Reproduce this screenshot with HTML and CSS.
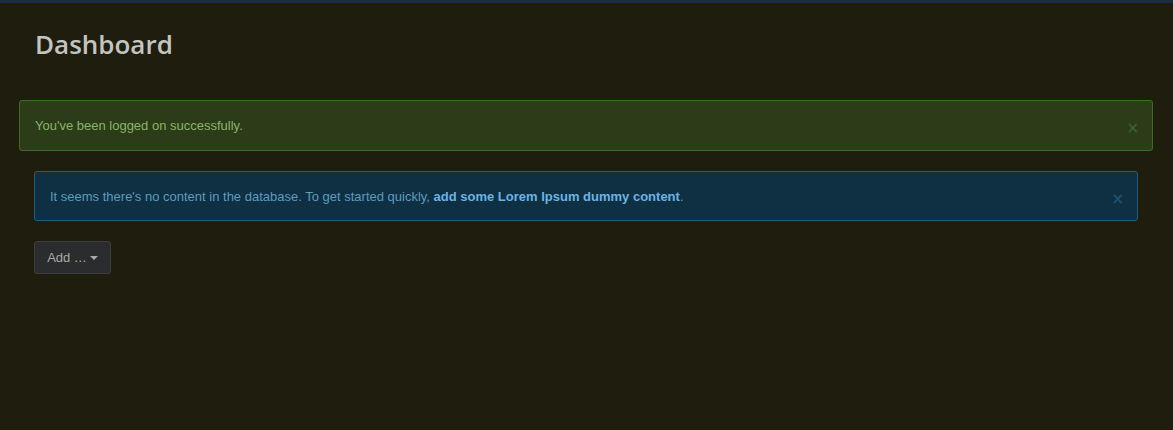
FILE: index.html
```html
<!DOCTYPE html>
<html>
<head>
<meta charset="utf-8">
<link rel="stylesheet" href="styles.css">
</head>
<body>
<div class="topbar"></div>
<main class="page">
  <h1 class="title">Dashboard</h1>
  <div class="alert alert-success">
    <span>You've been logged on successfully.</span>
    <span class="close">×</span>
  </div>
  <div class="inner">
    <div class="alert alert-info">
      <span>It seems there's no content in the database. To get started quickly, <a class="link" href="#">add some Lorem Ipsum dummy content</a>.</span>
      <span class="close">×</span>
    </div>
    <div class="actions">
      <button class="btn">Add … <span class="caret"></span></button>
    </div>
  </div>
</main>
</body>
</html>
```

FILE: styles.css
```css
html, body {
  margin: 0;
  padding: 0;
  background: #1f1e0e;
  height: 100%;
}
body {
  font-family: "Liberation Sans", Arial, sans-serif;
  font-size: 13px;
  overflow: hidden;
}
.topbar {
  height: 3px;
  background: #1b2d47;
}
.page {
  padding: 0 20px 0 19px;
}
.title {
  margin: 0;
  padding: 21px 0 0 16px;
  height: 97px;
  box-sizing: border-box;
  font-family: "Open Sans", sans-serif;
  font-weight: 600;
  font-size: 26px;
  line-height: 40px;
  color: #c4c5c0;
}
.alert {
  display: flex;
  justify-content: space-between;
  align-items: center;
  border: 1px solid;
  border-radius: 3px;
  box-sizing: border-box;
  height: 51px;
  padding: 0 15px;
}
.alert-success {
  background: #2c3c18;
  border-color: #3d6d24;
  color: #89b46c;
  margin-bottom: 20px;
}
.alert-info {
  background: #0f2f42;
  border-color: #1b5f7c;
  color: #5c9cbf;
  height: 50px;
}
.inner {
  padding: 0 15px;
}
.link {
  color: #6ab4e6;
  font-weight: bold;
  text-decoration: none;
}
.close {
  font-family: "DejaVu Sans", sans-serif;
  font-weight: bold;
  font-size: 15px;
  line-height: 15px;
  position: relative;
  top: 3px;
  right: -2px;
}
.alert-success .close { color: #3e5a30; }
.alert-info .close { color: #23506a; }
.actions {
  padding-top: 20px;
}
.btn {
  font-family: "Liberation Sans", Arial, sans-serif;
  font-size: 13px;
  color: #a8a9a8;
  background: #2a2c2e;
  border: 1px solid #3b3d3f;
  border-radius: 3px;
  height: 33px;
  width: 77px;
  padding: 0;
  display: inline-flex;
  align-items: center;
  justify-content: center;
  gap: 3px;
}
.caret {
  display: inline-block;
  width: 0;
  height: 0;
  border-left: 4px solid transparent;
  border-right: 4px solid transparent;
  border-top: 4px solid #a8a9a8;
}
```
